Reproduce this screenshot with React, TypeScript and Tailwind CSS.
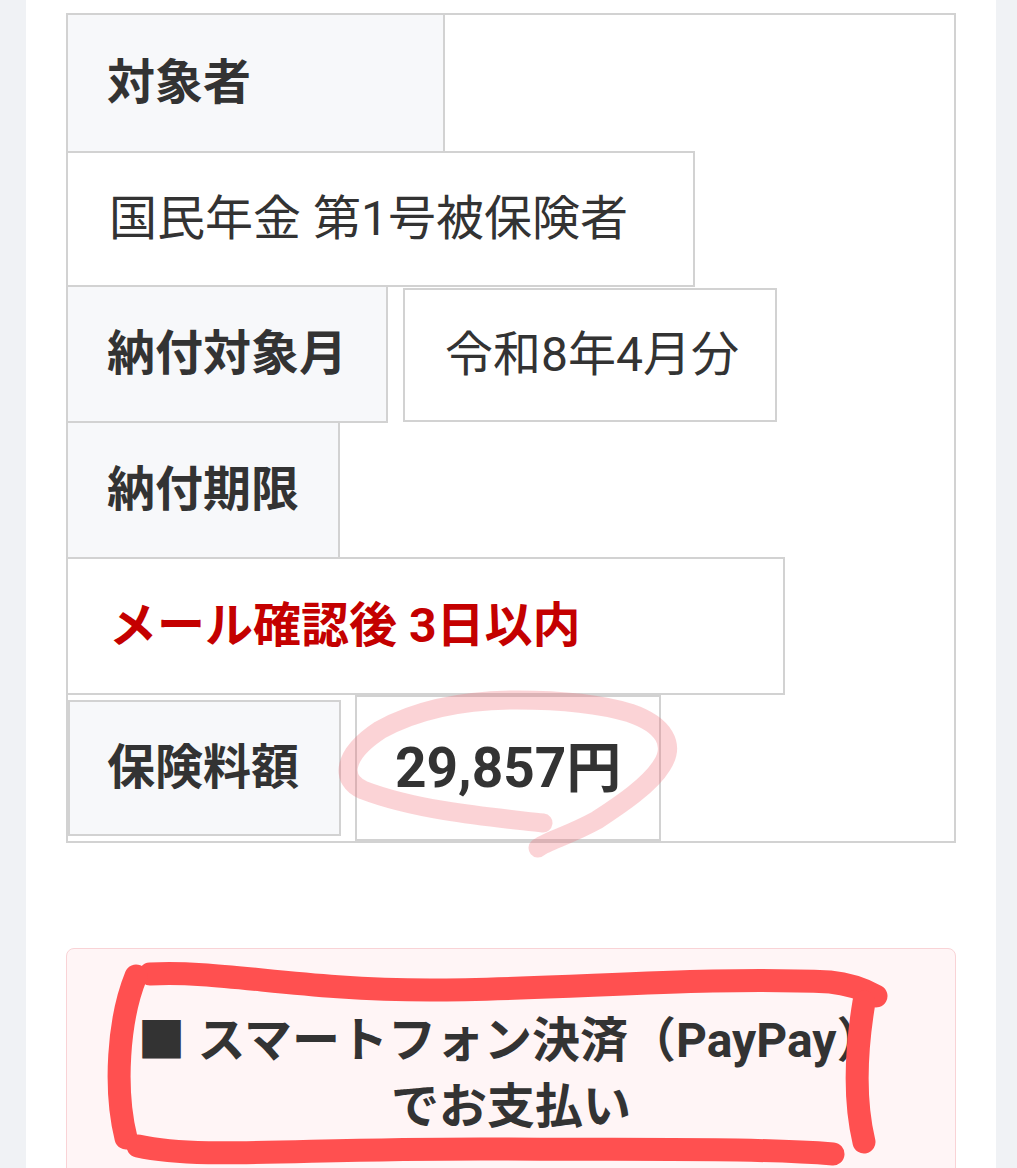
import React from 'react';

const font = { fontFamily: '"Roboto", "Noto Sans CJK JP", sans-serif' };

const App: React.FC = () => {
  return (
    <div className="relative min-h-screen bg-[#f0f2f5]" style={font}>
      <div className="ml-[26px] w-[970px] bg-white px-[40px] pt-[13px] pb-[40px] text-[#333]">
        {/* 納付情報テーブル */}
        <div className="border-2 border-[#d2d2d2] text-[48px] leading-none">
          <div className="flex">
            <div className="flex h-[138px] w-[377px] items-center border-r-2 border-b-2 border-[#d2d2d2] bg-[#f7f8fa] pl-[39px] font-bold">
              対象者
            </div>
          </div>
          <div className="flex">
            <div className="-mt-[2px] flex h-[136px] w-[627px] items-center border-t-2 border-r-2 border-b-2 border-[#d2d2d2] pl-[41px]">
              国民年金 第1号被保険者
            </div>
          </div>
          <div className="flex items-start">
            <div className="flex h-[136px] w-[320px] items-center border-r-2 border-b-2 border-[#d2d2d2] bg-[#f7f8fa] pl-[39px] font-bold">
              納付対象月
            </div>
            <div className="ml-[15px] mt-[1px] flex h-[134px] w-[374px] items-center border-2 border-[#d2d2d2] pl-[40px]">
              令和8年4月分
            </div>
          </div>
          <div className="flex">
            <div className="flex h-[136px] w-[272px] items-center border-r-2 border-b-2 border-[#d2d2d2] bg-[#f7f8fa] pl-[39px] font-bold">
              納付期限
            </div>
          </div>
          <div className="flex">
            <div className="-mt-[2px] flex h-[138px] w-[717px] items-center border-t-2 border-r-2 border-b-2 border-[#d2d2d2] pl-[41px] font-bold text-[#c40000]">
              メール確認後 3日以内
            </div>
          </div>
          <div className="flex items-start">
            <div className="mt-[5px] flex h-[136px] w-[273px] items-center border-2 border-[#d2d2d2] bg-[#f7f8fa] pl-[37px] font-bold">
              保険料額
            </div>
            <div className="ml-[14px] flex h-[146px] w-[306px] items-center border-2 border-[#d2d2d2] pl-[38px] text-[55px] font-bold">
              29,857円
            </div>
          </div>
        </div>

        {/* 支払い方法 */}
        <div className="mt-[105px] rounded-[8px] border border-[#f9d3d6] bg-[#fff5f6] px-[40px] pt-[59px] pb-[120px]">
          <h2 className="text-center text-[48px] font-bold leading-[66px]">
            ■ スマートフォン決済（PayPay）
            <br />
            でお支払い
          </h2>
        </div>
      </div>

      {/* 手書きの注釈 */}
      <svg className="pointer-events-none absolute left-0 top-0" width="1017" height="1168" viewBox="0 0 1017 1168">
        <path
          d="M543 823 C 500 818, 420 812, 363 790 C 340 780, 342 755, 380 730 C 420 708, 470 700, 517 700 C 560 700, 600 704, 630 713 C 665 725, 675 745, 662 765 C 650 785, 620 805, 597 820 C 570 835, 545 842, 538 848"
          fill="none"
          stroke="#f26d78"
          strokeOpacity="0.3"
          strokeWidth="19"
          strokeLinecap="round"
          strokeLinejoin="round"
        />
        <g fill="none" stroke="#ff5050" strokeWidth="23" strokeLinecap="round" strokeLinejoin="round">
          <path d="M150 974 C 220 970, 300 990, 430 990 C 560 990, 700 976, 830 982 C 850 984, 865 990, 876 996" />
          <path d="M864 1002 C 856 1050, 854 1100, 864 1142" />
          <path d="M136 976 C 118 1020, 114 1090, 126 1138" />
          <path d="M138 1146 C 200 1160, 300 1148, 500 1149 C 650 1150, 760 1148, 833 1154" />
        </g>
      </svg>
    </div>
  );
};

export default App;
